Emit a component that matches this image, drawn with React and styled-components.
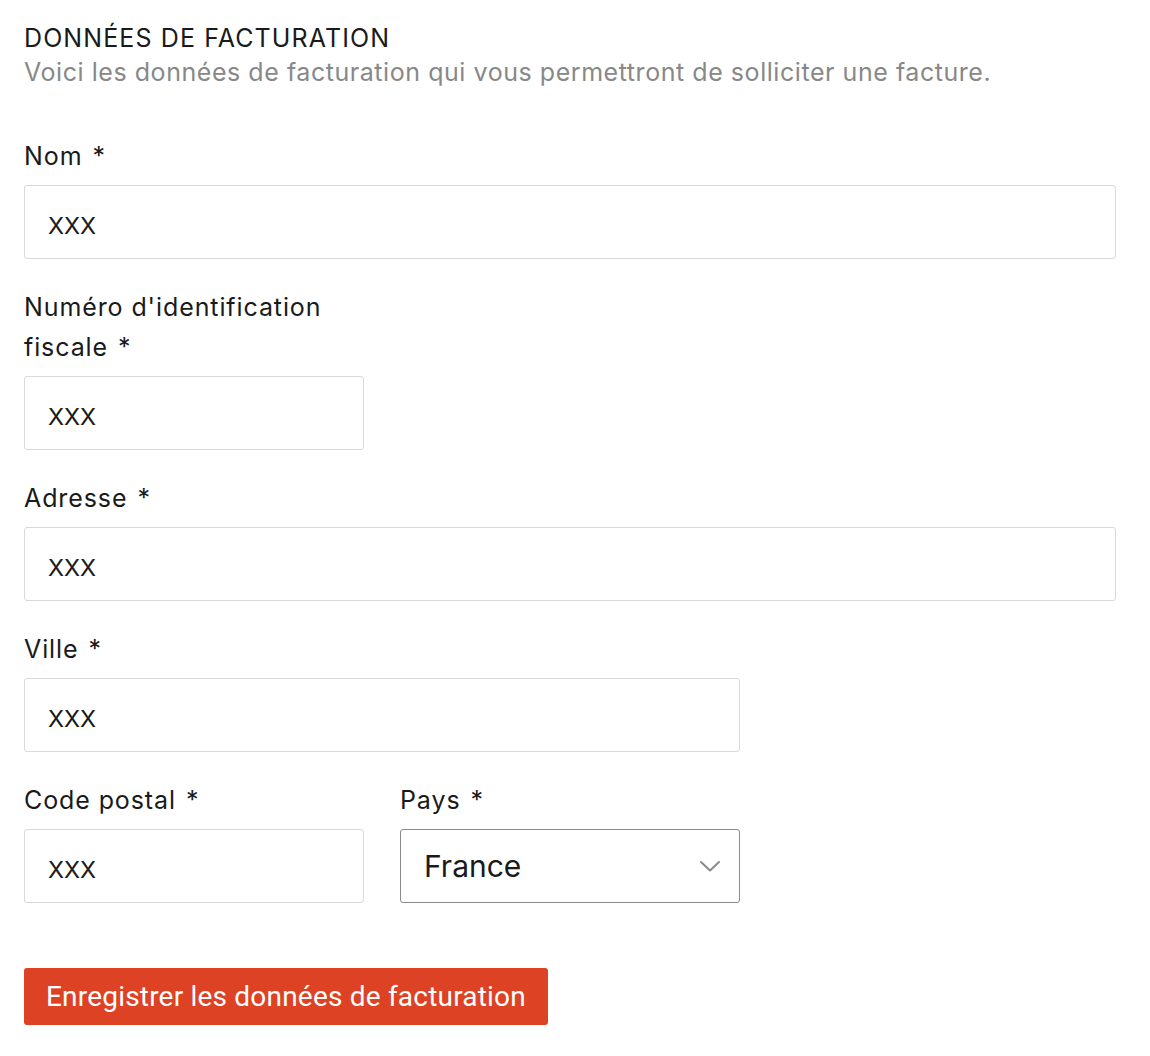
import styled, { createGlobalStyle } from 'styled-components';

const GlobalStyle = createGlobalStyle`
    body {
        margin: 0;
        background: #fff;
        font-family: Inter, 'Noto Sans', sans-serif;
        color: #1a1a1a;
    }
`;

const Page = styled.div`
    width: 1092px;
    padding: 20px 24px 30px;
`;

const Header = styled.div`
    margin-bottom: 48px;
`;

const Title = styled.h2`
    margin: 0;
    font-size: 25px;
    font-weight: 400;
    line-height: 36px;
    letter-spacing: 1.1px;
`;

const Subtitle = styled.p`
    margin: 0;
    font-size: 25px;
    line-height: 32px;
    color: #888888;
    letter-spacing: 0.55px;
`;

const Form = styled.form`
    display: flex;
    flex-direction: column;
    gap: 28px;
`;

const Row = styled.div`
    display: flex;
    gap: 36px;
`;

const Field = styled.div`
    display: flex;
    flex-direction: column;
    width: ${(p) => p.$width || '100%'};
`;

const Label = styled.label`
    font-size: 25px;
    line-height: 40px;
    margin-bottom: 9px;
    letter-spacing: 0.9px;

    span {
        margin-left: 10px;
    }
`;

const Input = styled.input`
    box-sizing: border-box;
    height: 74px;
    width: 100%;
    border: 1px solid #d9d9d9;
    border-radius: 3px;
    padding: 6px 23px 0;
    font-family: Inter, 'Noto Sans', sans-serif;
    font-size: 23.5px;
    color: #1a1a1a;
    background: #fff;
    &:focus {
        outline: none;
    }
`;

const SelectBox = styled.div`
    position: relative;
    box-sizing: border-box;
    height: 74px;
    width: 100%;
    border: 1px solid #8a8a8a;
    border-radius: 3px;
    display: flex;
    align-items: center;
    padding: 0 23px;
    font-size: 30px;
    color: #1a1a1a;

    svg {
        margin-left: auto;
        margin-right: -5px;
    }
`;

const Button = styled.button`
    align-self: flex-start;
    margin-top: 37px;
    height: 57px;
    padding: 0 22px;
    border: none;
    border-radius: 3px;
    background: #dd4224;
    color: #fff;
    font-family: Roboto, 'Noto Sans', sans-serif;
    font-size: 28px;
    letter-spacing: 0.2px;
    cursor: pointer;
`;

const Chevron = () => (
    <svg width="22" height="14" viewBox="0 0 22 14" fill="none">
        <path d="M2 3l9 8.5L20 3" stroke="#8a8a8a" strokeWidth="2" strokeLinecap="round" strokeLinejoin="round" />
    </svg>
);

const App = () => {
    return (
        <Page>
            <GlobalStyle />
            <Header>
                <Title>DONNÉES DE FACTURATION</Title>
                <Subtitle>Voici les données de facturation qui vous permettront de solliciter une facture.</Subtitle>
            </Header>
            <Form onSubmit={(e) => e.preventDefault()}>
                <Field>
                    <Label>Nom<span>*</span></Label>
                    <Input defaultValue="XXX" />
                </Field>
                <Field $width="340px">
                    <Label>Numéro d'identification fiscale<span>*</span></Label>
                    <Input defaultValue="XXX" />
                </Field>
                <Field>
                    <Label>Adresse<span>*</span></Label>
                    <Input defaultValue="XXX" />
                </Field>
                <Field $width="716px">
                    <Label>Ville<span>*</span></Label>
                    <Input defaultValue="XXX" />
                </Field>
                <Row>
                    <Field $width="340px">
                        <Label>Code postal<span>*</span></Label>
                        <Input defaultValue="XXX" />
                    </Field>
                    <Field $width="340px">
                        <Label>Pays<span>*</span></Label>
                        <SelectBox>
                            France
                            <Chevron />
                        </SelectBox>
                    </Field>
                </Row>
                <Button type="submit">Enregistrer les données de facturation</Button>
            </Form>
        </Page>
    );
};

export default App;
